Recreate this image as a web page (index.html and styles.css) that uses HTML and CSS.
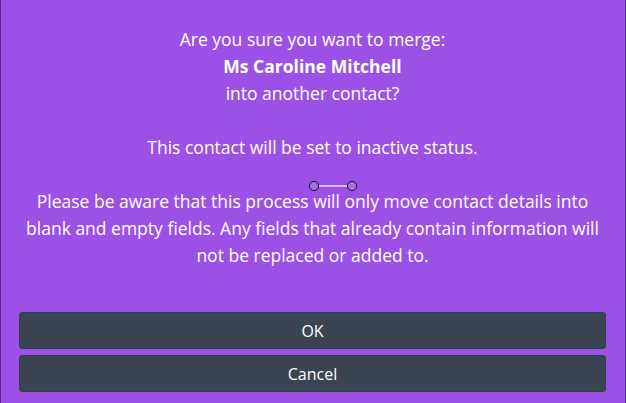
FILE: index.html
```html
<!DOCTYPE html>
<html>
<head>
<meta charset="utf-8">
<link rel="stylesheet" href="styles.css">
</head>
<body>
<div class="dialog">
  <div class="message">
    <p>Are you sure you want to merge:<br><strong>Ms Caroline Mitchell</strong><br>into another contact?</p>
    <p>This contact will be set to inactive status.</p>
    <p>Please be aware that this process will only move contact details into blank and empty fields. Any fields that already contain information will not be replaced or added to.</p>
  </div>
  <div class="actions">
    <button class="btn">OK</button>
    <button class="btn">Cancel</button>
  </div>
  <svg class="handle" width="50" height="14" viewBox="0 0 50 14">
    <line x1="10" y1="7" x2="40" y2="7" stroke="#ffffff" stroke-width="1.2"/>
    <circle cx="6" cy="7" r="4.6" fill="#a46ee6" stroke="#1a1026" stroke-width="1"/>
    <circle cx="44" cy="7" r="4.6" fill="#a46ee6" stroke="#1a1026" stroke-width="1"/>
  </svg>
</div>
</body>
</html>
```
FILE: styles.css
```css
html, body {
  margin: 0;
  padding: 0;
  height: 100%;
}
body {
  background: #9c51e6;
  font-family: "Open Sans", "Noto Sans", sans-serif;
}
.dialog {
  position: relative;
  box-sizing: border-box;
  height: 403px;
  border-left: 1px solid #5a2d8c;
  border-right: 1px solid #5a2d8c;
  padding: 26px 19px 0 18px;
  display: flex;
  flex-direction: column;
}
.message {
  color: #ffffff;
  font-size: 17.5px;
  line-height: 27px;
  text-align: center;
  padding: 0 4px;
}
.message p {
  margin: 0 0 27px 0;
}
.message p:last-child {
  margin-bottom: 0;
}
.message strong {
  font-weight: 700;
}
.actions {
  margin-top: 43px;
  display: flex;
  flex-direction: column;
  gap: 6px;
}
.btn {
  height: 37px;
  background: #3b4551;
  border: 1px solid #343d48;
  border-radius: 3px;
  color: #ffffff;
  font-family: "Open Sans", "Noto Sans", sans-serif;
  font-size: 16px;
  padding: 0;
}
.handle {
  position: absolute;
  left: 307px;
  top: 179px;
}
```
